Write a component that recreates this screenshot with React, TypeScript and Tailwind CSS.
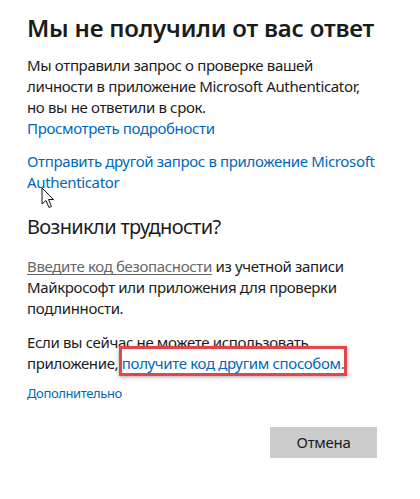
const Cursor = () => (
  <svg
    className="absolute left-[41px] top-[187px]"
    width="14"
    height="22"
    viewBox="0 0 14 22"
  >
    <path
      d="M1 1 L1 17 L5 13.5 L8 20.5 L10.5 19.5 L7.5 12.5 L12.5 12.5 Z"
      fill="#fff"
      stroke="#111"
      strokeWidth="1"
      strokeLinejoin="round"
    />
  </svg>
);

export default function App() {
  return (
    <div
      className="relative w-[420px] h-[499px] bg-white text-[#1b1b1b] overflow-hidden"
      style={{ fontFamily: '"Noto Sans", "Open Sans", sans-serif' }}
    >
      <div className="pl-[27px] pr-[20px] pt-[12px] flex flex-col">
        <h1 className="text-[24px] leading-[32px] font-semibold tracking-[-0.2px]">
          Мы не получили от вас ответ
        </h1>

        <div className="mt-[11px] text-[15px] leading-[21px] tracking-[-0.35px]">
          <p>
            Мы отправили запрос о проверке вашей
            <br />
            личности в приложение Microsoft Authenticator,
            <br />
            но вы не ответили в срок.
          </p>
          <a className="text-[#0067b8]">Просмотреть подробности</a>
        </div>

        <a className="mt-[12px] text-[15px] leading-[21px] tracking-[-0.35px] text-[#0067b8]">
          Отправить другой запрос в приложение Microsoft
          <br />
          Authenticator
        </a>

        <h2 className="mt-[20px] text-[20px] leading-[28px] tracking-[-0.65px]">
          Возникли трудности?
        </h2>

        <p className="mt-[15px] text-[15px] leading-[21px] tracking-[-0.35px]">
          <span className="text-[#666] underline underline-offset-2">
            Введите код безопасности
          </span>{" "}
          из учетной записи
          <br />
          Майкрософт или приложения для проверки
          <br />
          подлинности.
        </p>

        <p className="mt-[13px] text-[15px] leading-[21px] tracking-[-0.35px]">
          Если вы сейчас не можете использовать
          <br />
          приложение,{" "}
          <span className="relative text-[#0067b8]">
            получите код другим способом.
            <span className="absolute -left-[3px] -right-[3px] -top-[7px] -bottom-[3px] border-[3px] border-[#e0474c] shadow-[0_1px_4px_rgba(0,0,0,0.35)]" />
          </span>
        </p>

        <a className="mt-[10px] text-[13px] leading-[18px] tracking-[-0.4px] text-[#0067b8]">
          Дополнительно
        </a>

        <div className="mt-[25px] flex justify-end pr-[23px]">
          <button className="w-[107px] h-[31px] bg-[#cccccc] text-[15px] tracking-[-0.3px] text-[#1b1b1b]">
            Отмена
          </button>
        </div>
      </div>
      <Cursor />
    </div>
  );
}
